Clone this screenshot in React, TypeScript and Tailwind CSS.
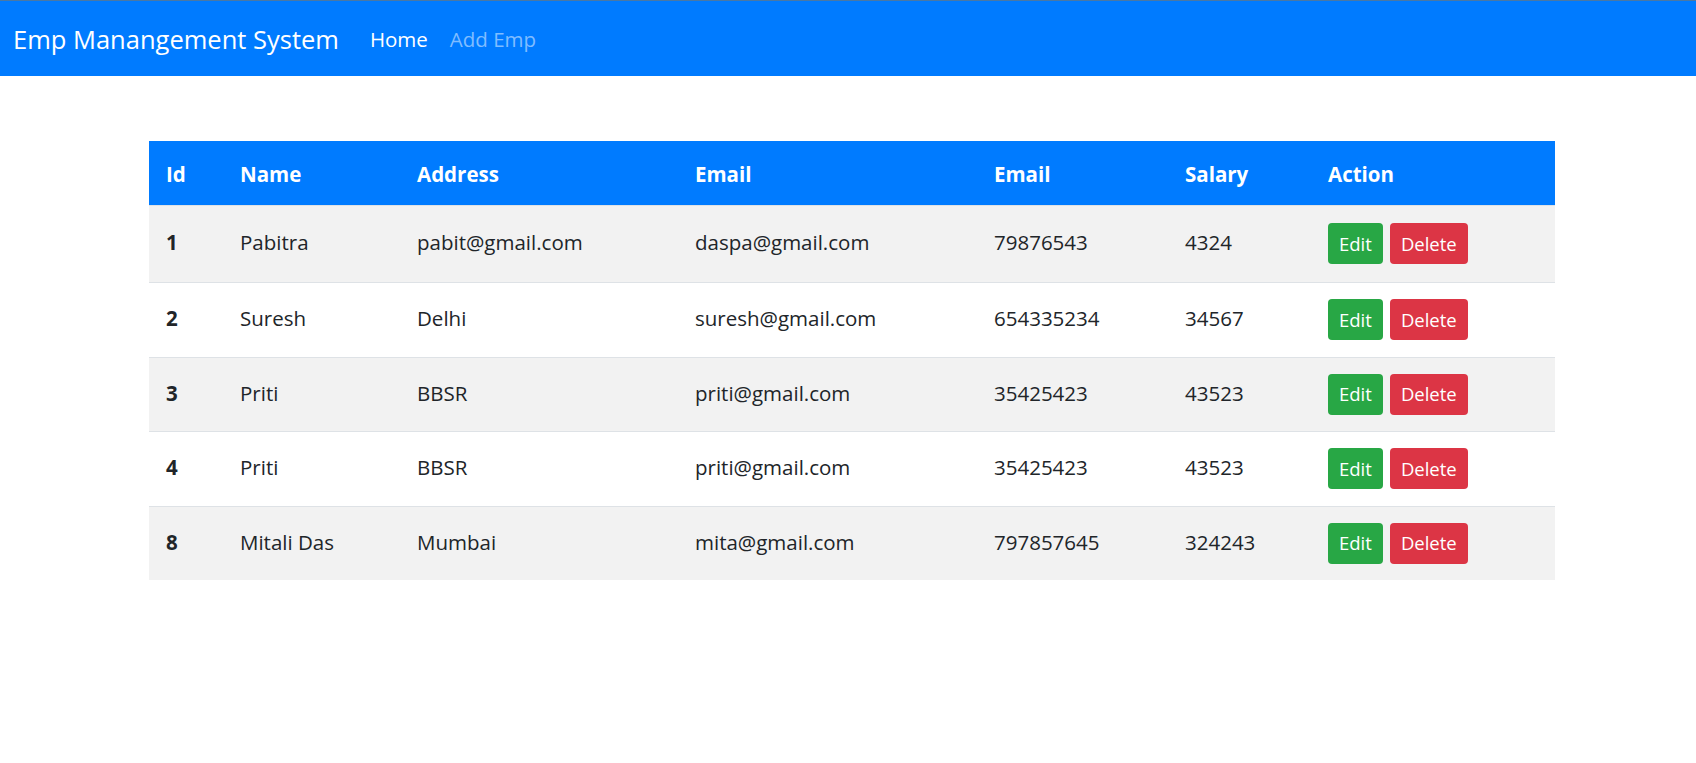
import React from 'react';

interface Employee {
  id: number;
  name: string;
  address: string;
  email: string;
  phone: string;
  salary: string;
}

const employees: Employee[] = [
  { id: 1, name: 'Pabitra', address: 'pabit@gmail.com', email: 'daspa@gmail.com', phone: '79876543', salary: '4324' },
  { id: 2, name: 'Suresh', address: 'Delhi', email: 'suresh@gmail.com', phone: '654335234', salary: '34567' },
  { id: 3, name: 'Priti', address: 'BBSR', email: 'priti@gmail.com', phone: '35425423', salary: '43523' },
  { id: 4, name: 'Priti', address: 'BBSR', email: 'priti@gmail.com', phone: '35425423', salary: '43523' },
  { id: 8, name: 'Mitali Das', address: 'Mumbai', email: 'mita@gmail.com', phone: '797857645', salary: '324243' },
];

const headers = ['Id', 'Name', 'Address', 'Email', 'Email', 'Salary', 'Action'];

// Row heights measured from the screenshot
const rowHeights = ['h-[77px]', 'h-[75px]', 'h-[74px]', 'h-[75px]', 'h-[74px]'];

function Navbar() {
  return (
    <nav className="h-[76px] border-t border-[#4a78a3] bg-[#007bff] flex items-center pl-[13px] pt-[2px]">
      <a href="#" className="text-[25.5px] text-white mr-[31px]">
        Emp Manangement System
      </a>
      <div className="flex items-center gap-[22px] text-[20.5px]">
        <a href="#" className="text-white">Home</a>
        <a href="#" className="text-[#80bdff]">Add Emp</a>
      </div>
    </nav>
  );
}

function ActionButtons() {
  return (
    <div className="flex items-center gap-[7px]">
      <button className="h-[41px] px-[11px] rounded-[4px] bg-[#28a745] text-white text-[18.5px]">
        Edit
      </button>
      <button className="h-[41px] px-[11px] rounded-[4px] bg-[#dc3545] text-white text-[18.5px]">
        Delete
      </button>
    </div>
  );
}

export default function App() {
  return (
    <div className="min-h-screen bg-white text-[#212529] font-['Open_Sans',sans-serif]">
      <Navbar />
      <div className="ml-[149px] mt-[65px] w-[1406px]">
        <table className="w-full table-fixed border-collapse text-[20.5px]">
          <colgroup>
            <col className="w-[74px]" />
            <col className="w-[177px]" />
            <col className="w-[278px]" />
            <col className="w-[299px]" />
            <col className="w-[191px]" />
            <col className="w-[143px]" />
            <col className="w-[244px]" />
          </colgroup>
          <thead>
            <tr className="h-[64px] bg-[#007bff] text-white">
              {headers.map((h, i) => (
                <th key={i} className="text-left font-bold pl-[17px] pt-[3px]">
                  {h}
                </th>
              ))}
            </tr>
          </thead>
          <tbody>
            {employees.map((emp, i) => (
              <tr
                key={i}
                className={`${rowHeights[i]} border-t border-[#dee2e6] ${i % 2 === 0 ? 'bg-[#f2f2f2]' : 'bg-white'}`}
              >
                <th className="text-left font-bold pl-[17px] pb-[2px]">{emp.id}</th>
                <td className="pl-[17px] pb-[2px]">{emp.name}</td>
                <td className="pl-[17px] pb-[2px]">{emp.address}</td>
                <td className="pl-[17px] pb-[2px]">{emp.email}</td>
                <td className="pl-[17px] pb-[2px]">{emp.phone}</td>
                <td className="pl-[17px] pb-[2px]">{emp.salary}</td>
                <td className="pl-[17px]">
                  <ActionButtons />
                </td>
              </tr>
            ))}
          </tbody>
        </table>
      </div>
    </div>
  );
}
